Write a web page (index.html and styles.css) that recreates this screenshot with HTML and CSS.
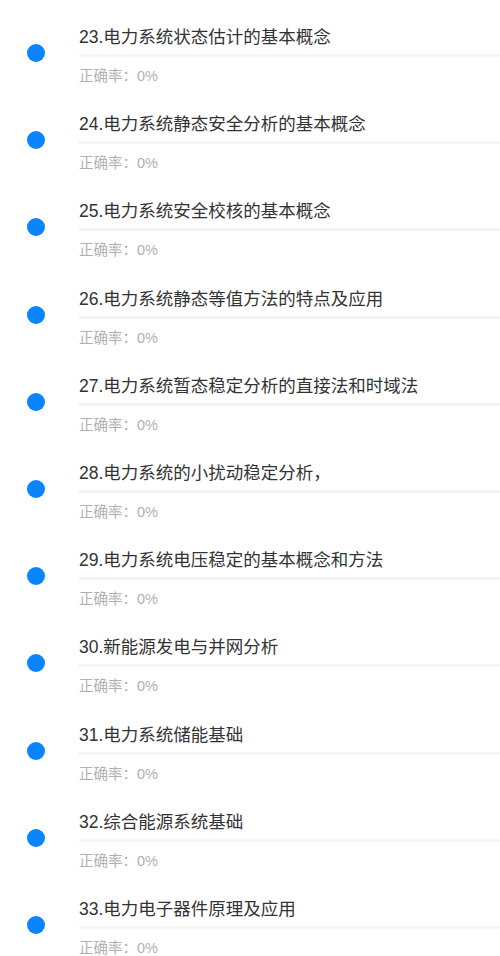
FILE: index.html
```html
<!DOCTYPE html>
<html lang="zh-CN">
<head>
<meta charset="utf-8">
<title>章节列表</title>
<link rel="stylesheet" href="styles.css">
</head>
<body>
<ul class="list">
  <li class="item"><span class="dot"></span><div class="body"><div class="title">23.电力系统状态估计的基本概念</div><div class="bar"></div><div class="rate">正确率：0%</div></div></li>
  <li class="item"><span class="dot"></span><div class="body"><div class="title">24.电力系统静态安全分析的基本概念</div><div class="bar"></div><div class="rate">正确率：0%</div></div></li>
  <li class="item"><span class="dot"></span><div class="body"><div class="title">25.电力系统安全校核的基本概念</div><div class="bar"></div><div class="rate">正确率：0%</div></div></li>
  <li class="item"><span class="dot"></span><div class="body"><div class="title">26.电力系统静态等值方法的特点及应用</div><div class="bar"></div><div class="rate">正确率：0%</div></div></li>
  <li class="item"><span class="dot"></span><div class="body"><div class="title">27.电力系统暂态稳定分析的直接法和时域法</div><div class="bar"></div><div class="rate">正确率：0%</div></div></li>
  <li class="item"><span class="dot"></span><div class="body"><div class="title">28.电力系统的小扰动稳定分析，</div><div class="bar"></div><div class="rate">正确率：0%</div></div></li>
  <li class="item"><span class="dot"></span><div class="body"><div class="title">29.电力系统电压稳定的基本概念和方法</div><div class="bar"></div><div class="rate">正确率：0%</div></div></li>
  <li class="item"><span class="dot"></span><div class="body"><div class="title">30.新能源发电与并网分析</div><div class="bar"></div><div class="rate">正确率：0%</div></div></li>
  <li class="item"><span class="dot"></span><div class="body"><div class="title">31.电力系统储能基础</div><div class="bar"></div><div class="rate">正确率：0%</div></div></li>
  <li class="item"><span class="dot"></span><div class="body"><div class="title">32.综合能源系统基础</div><div class="bar"></div><div class="rate">正确率：0%</div></div></li>
  <li class="item"><span class="dot"></span><div class="body"><div class="title">33.电力电子器件原理及应用</div><div class="bar"></div><div class="rate">正确率：0%</div></div></li>
</ul>
</body>
</html>
```
FILE: styles.css
```css
html, body {
  margin: 0;
  padding: 0;
  background: #ffffff;
}
body {
  font-family: "Liberation Sans", "Noto Sans CJK SC", sans-serif;
  overflow: hidden;
}
.list {
  list-style: none;
  margin: 0;
  padding: 0;
}
.item {
  display: flex;
  height: 87.2px;
  box-sizing: border-box;
  padding-top: 25px;
}
.dot {
  flex: none;
  width: 18px;
  height: 18px;
  border-radius: 50%;
  background: #0a84ff;
  margin: 19px 34px 0 27px;
}
.body {
  flex: 1;
  min-width: 0;
}
.title {
  font-size: 17.5px;
  line-height: 24px;
  color: #333333;
  white-space: nowrap;
}
.bar {
  height: 3px;
  background: #f4f4f4;
  margin-top: 5px;
}
.rate {
  margin-top: 9px;
  font-size: 14.5px;
  line-height: 20px;
  color: #b0b0b0;
}
```
